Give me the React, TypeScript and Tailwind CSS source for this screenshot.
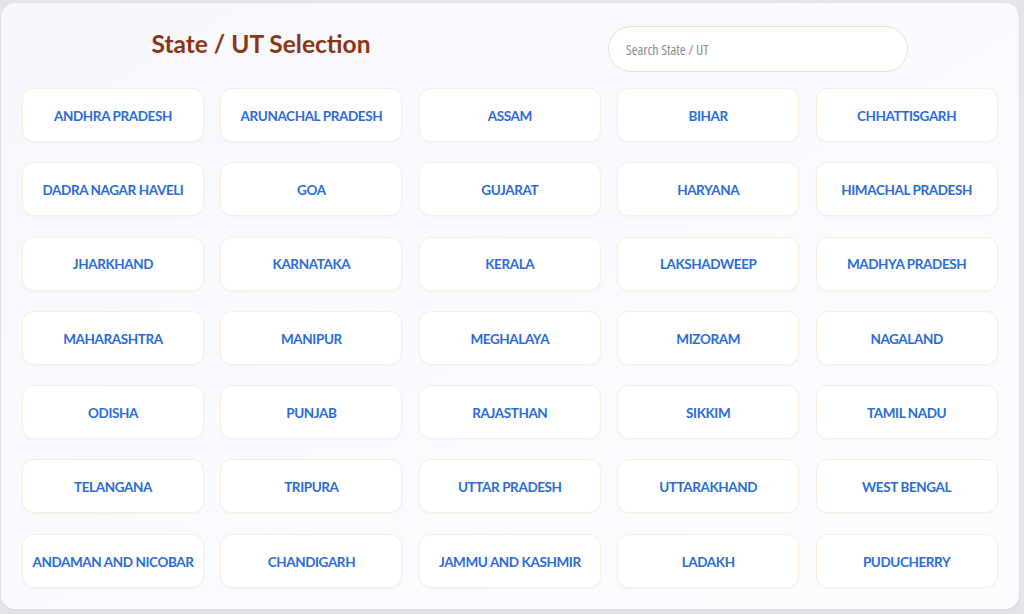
const STATES = [
  "Andhra Pradesh",
  "Arunachal Pradesh",
  "Assam",
  "Bihar",
  "Chhattisgarh",
  "Dadra Nagar Haveli",
  "Goa",
  "Gujarat",
  "Haryana",
  "Himachal Pradesh",
  "Jharkhand",
  "Karnataka",
  "Kerala",
  "Lakshadweep",
  "Madhya Pradesh",
  "Maharashtra",
  "Manipur",
  "Meghalaya",
  "Mizoram",
  "Nagaland",
  "Odisha",
  "Punjab",
  "Rajasthan",
  "Sikkim",
  "Tamil Nadu",
  "Telangana",
  "Tripura",
  "Uttar Pradesh",
  "Uttarakhand",
  "West Bengal",
  "Andaman and Nicobar",
  "Chandigarh",
  "Jammu and Kashmir",
  "Ladakh",
  "Puducherry",
];

export default function App() {
  return (
    <div
      className="min-h-[614px] w-[1024px] bg-[#e3e5e9] pt-[3px] pr-[5px] pb-[5px] pl-[1px]"
      style={{ fontFamily: "Lato, 'Open Sans', sans-serif" }}
    >
      <div className="rounded-[14px] bg-gradient-to-br from-[#f5f7fb] via-[#f8fafd] to-[#fbfcfe] px-[21px] pt-[21px] pb-[21px] shadow-[0_1px_3px_rgba(0,0,0,0.08)]">
        {/* header: title + search */}
        <div className="flex items-start">
          <h1 className="mt-[2px] w-[478px] text-center text-[24.5px] leading-[36px] font-bold text-[#8a3511]">
            State / UT Selection
          </h1>
          <div className="ml-[108px] mt-[2px] flex h-[46px] w-[300px] items-center rounded-full border-[1.5px] border-[#f5dcc2] bg-white pl-[17px]">
            <input
              type="text"
              placeholder="Search State / UT"
              className="w-full bg-transparent font-['Open_Sans'] text-[14px] font-stretch-condensed text-[#555] outline-none placeholder:text-[#8c8c8c]"
            />
          </div>
        </div>

        {/* state buttons */}
        <div className="mt-[16px] grid grid-cols-5 gap-x-[16px] gap-y-[20.3px]">
          {STATES.map((s) => (
            <button
              key={s}
              className="flex h-[54px] w-[182px] items-center justify-center whitespace-nowrap rounded-[12px] border border-[#fbeddd] bg-white pt-[2px] text-[13.5px] font-bold tracking-[-0.4px] uppercase text-[#2a6cd6] shadow-[0_1px_2px_rgba(0,0,0,0.03)]"
            >
              {s}
            </button>
          ))}
        </div>
      </div>
    </div>
  );
}
